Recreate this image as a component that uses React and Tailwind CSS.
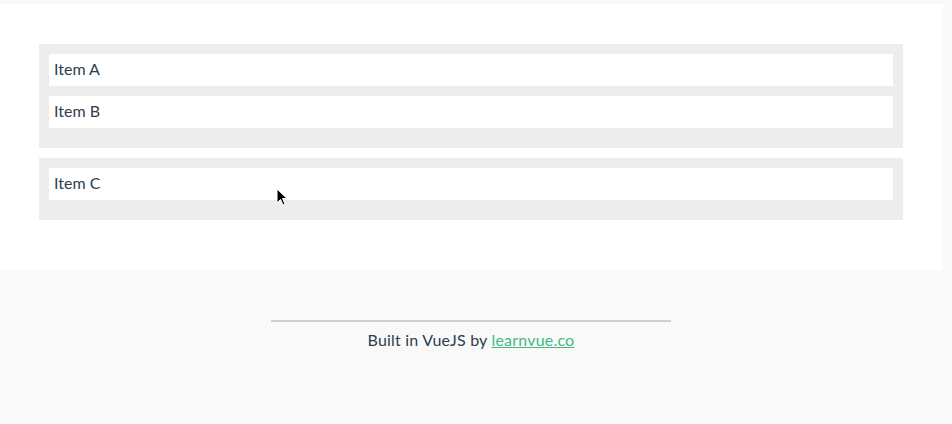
import React from 'react';

const groups = [['Item A', 'Item B'], ['Item C']];

export default function App() {
  return (
    <div className="relative min-h-[424px] bg-[#f9f9f9] pt-1 text-[#2c3e50] font-['Lato','Noto_Sans',sans-serif]">
      <div className="mr-[9px] bg-white pl-[39px] pr-[40px] pt-[40px] pb-[40px]">
        {groups.map((items, gi) => (
          <div key={gi} className="mb-[10px] bg-[#ededed] p-[10px] pb-[20px]">
            {items.map((item, i) => (
              <div
                key={item}
                className={`flex h-8 items-center bg-white pl-[5px] pb-[2px] text-[16px] ${i < items.length - 1 ? 'mb-[10px]' : ''}`}
              >
                {item}
              </div>
            ))}
          </div>
        ))}
      </div>
      <div className="mr-[10px] mt-[50px] flex flex-col items-center">
        <div className="h-[2px] w-[400px] bg-[#cfd0d4]" />
        <p className="mt-[8px] text-[16px] leading-5 tracking-[0.2px]">
          Built in VueJS by{' '}
          <a href="#" className="text-[#42b983] underline">learnvue.co</a>
        </p>
      </div>
      <svg className="absolute left-[276px] top-[188px]" width="12" height="20" viewBox="0 0 12 20">
        <path d="M1 1 L1 15 L4.5 11.5 L7 17 L9 16 L6.5 10.5 L11 10.5 Z" fill="#000" stroke="#fff" strokeWidth="1" />
      </svg>
    </div>
  );
}
